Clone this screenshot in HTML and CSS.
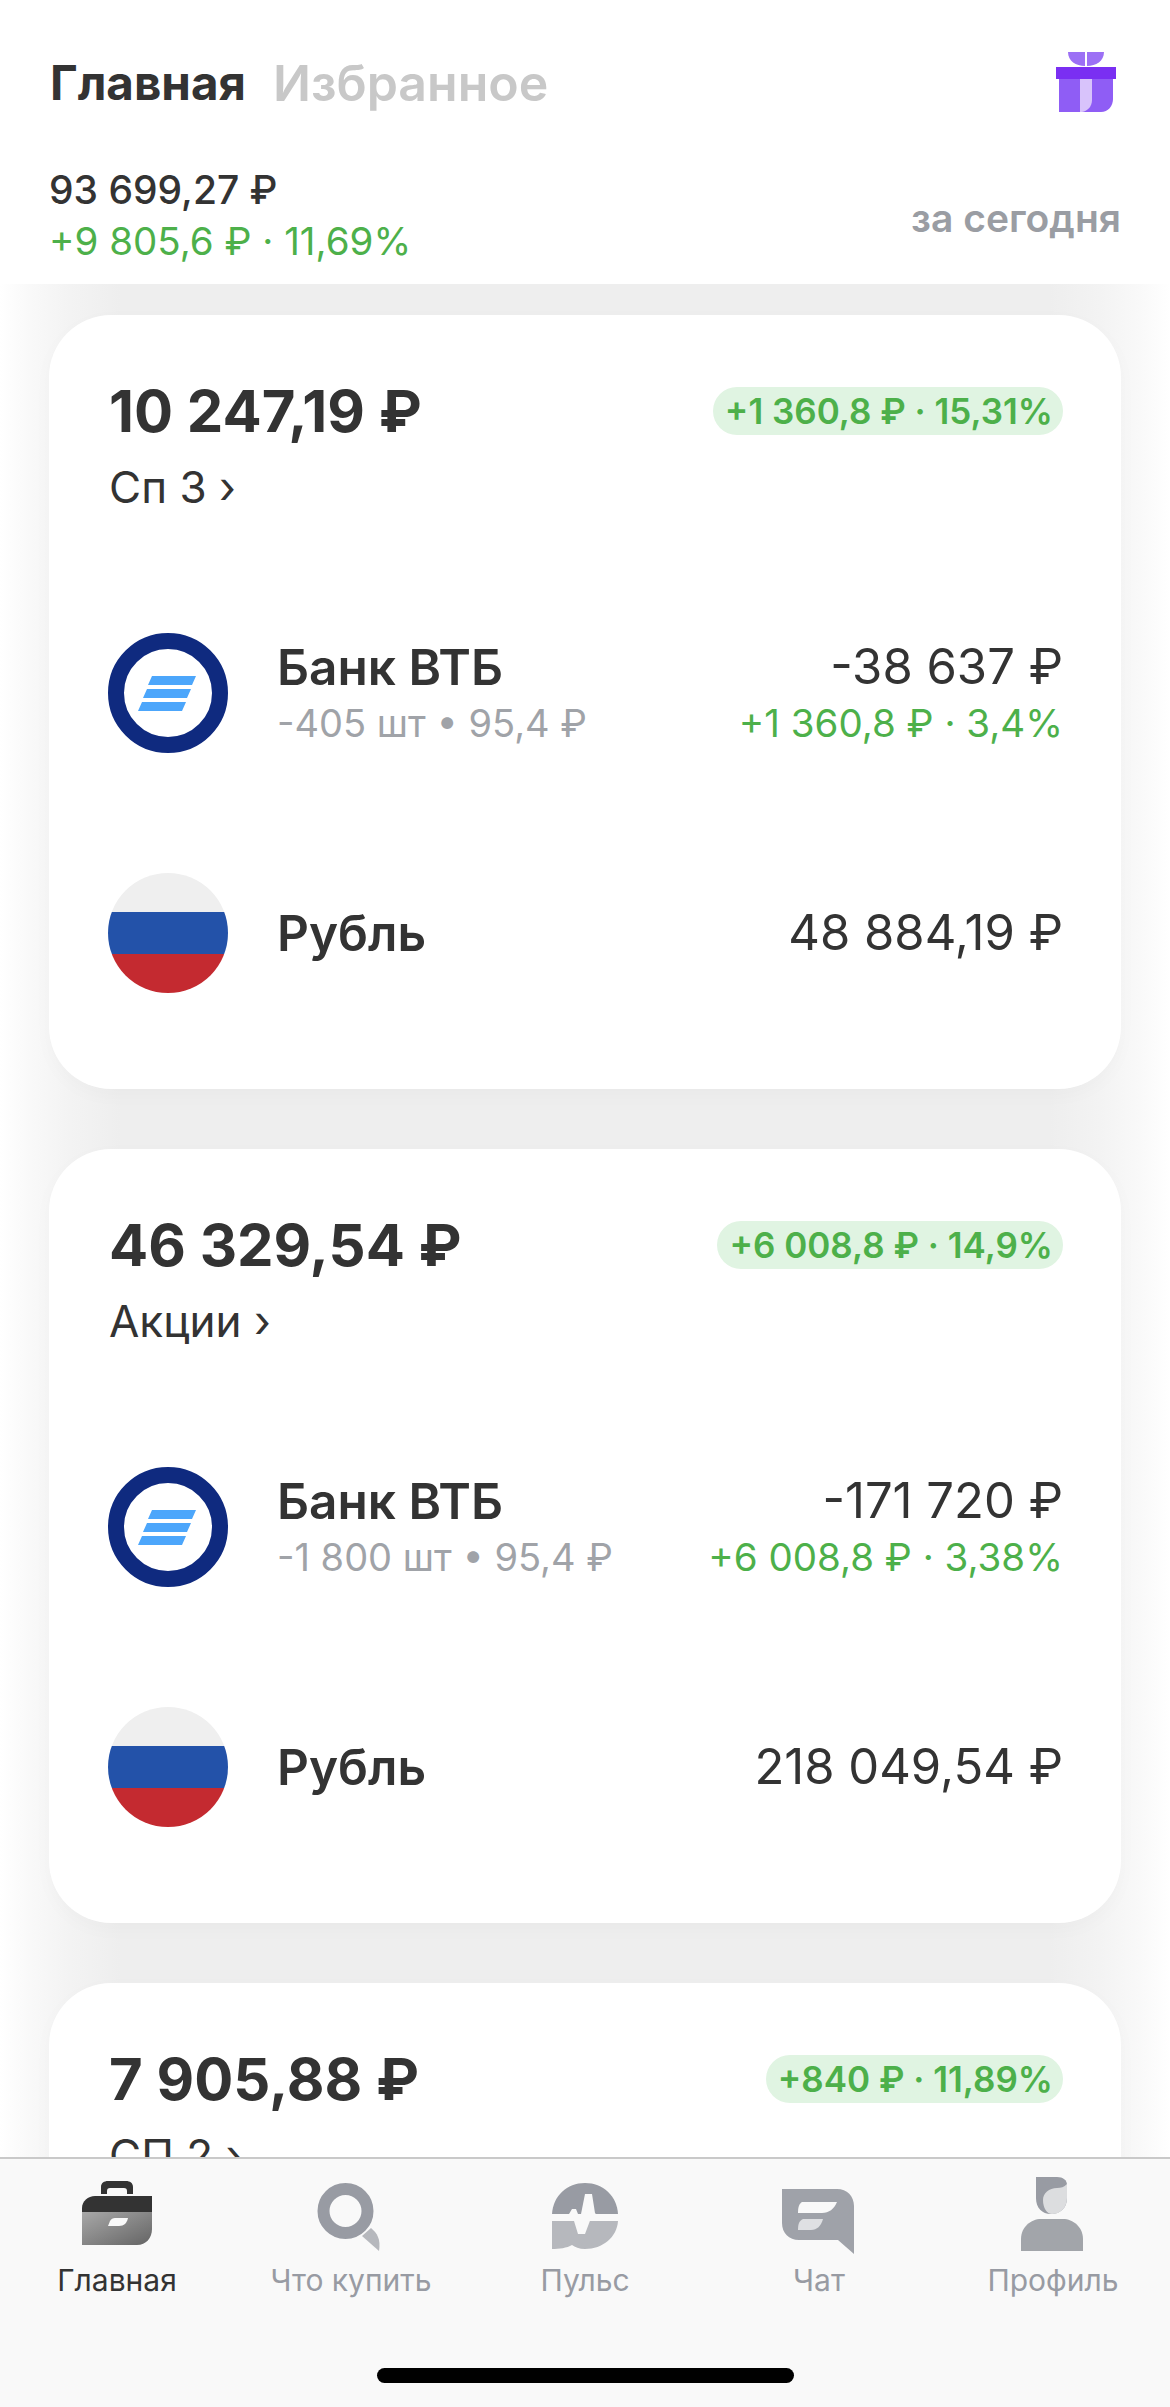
FILE: index.html
```html
<!DOCTYPE html>
<html lang="ru">
<head>
<meta charset="utf-8">
<title>Главная</title>
<link rel="stylesheet" href="styles.css">
</head>
<body>
<svg class="defs" width="0" height="0" aria-hidden="true">
  <defs>
    <symbol id="vtb" viewBox="0 0 120 120">
      <circle cx="60" cy="60" r="52" fill="#fff" stroke="#0f2a7f" stroke-width="16"/>
      <path d="M44 43H88L84 52H40ZM39 56H83L79 65H35ZM34 69H78L74 78H30Z" fill="#4ca6fb"/>
    </symbol>
    <symbol id="rub" viewBox="0 0 120 120">
      <clipPath id="rub-clip"><circle cx="60" cy="60" r="60"/></clipPath>
      <g clip-path="url(#rub-clip)">
        <rect width="120" height="40" fill="#efefef"/>
        <rect y="39" width="120" height="42" fill="#2352a9"/>
        <rect y="81" width="120" height="39" fill="#c42a30"/>
      </g>
    </symbol>
  </defs>
</svg>
<div class="screen">
  <header class="top">
    <div class="tabs-row">
      <div class="titles">
        <span class="title">Главная</span>
        <span class="title title-off">Избранное</span>
      </div>
      <svg class="gift" viewBox="0 0 60 60" width="60" height="60">
        <path d="M12 0H29V14C20 14 12 9 12 0ZM48 0H31V14C40 14 48 9 48 0Z" fill="#9c70f5"/>
        <path d="M3 27H57V47C57 54 52 60 45 60H3Z" fill="#8f5df5"/>
        <path d="M24 27H36V48C36 54 32 59 26 60H24Z" fill="#d8c3fb"/>
        <rect y="15" width="60" height="12" fill="#7a2ff2"/>
      </svg>
    </div>
    <div class="total-row">
      <div class="total">
        <div class="total-sum">93 699,27 ₽</div>
        <div class="total-gain">+9 805,6 ₽ · 11,69%</div>
      </div>
      <div class="period">за сегодня</div>
    </div>
  </header>

  <main class="feed">
    <section class="card">
      <div class="card-head">
        <div class="card-sum">10 247,19 ₽</div>
        <div class="pill">+1 360,8 ₽ · 15,31%</div>
      </div>
      <div class="card-name">Сп 3 ›</div>
      <div class="row row-first">
        <svg class="logo"><use href="#vtb"/></svg>
        <div class="row-main">
          <div class="row-name">Банк ВТБ</div>
          <div class="row-sub">-405 шт • 95,4 ₽</div>
        </div>
        <div class="row-side">
          <div class="row-val">-38 637 ₽</div>
          <div class="row-gain">+1 360,8 ₽ · 3,4%</div>
        </div>
      </div>
      <div class="row">
        <svg class="logo"><use href="#rub"/></svg>
        <div class="row-main"><div class="row-name">Рубль</div></div>
        <div class="row-side"><div class="row-val">48 884,19 ₽</div></div>
      </div>
    </section>

    <section class="card">
      <div class="card-head">
        <div class="card-sum">46 329,54 ₽</div>
        <div class="pill">+6 008,8 ₽ · 14,9%</div>
      </div>
      <div class="card-name">Акции ›</div>
      <div class="row row-first">
        <svg class="logo"><use href="#vtb"/></svg>
        <div class="row-main">
          <div class="row-name">Банк ВТБ</div>
          <div class="row-sub">-1 800 шт • 95,4 ₽</div>
        </div>
        <div class="row-side">
          <div class="row-val">-171 720 ₽</div>
          <div class="row-gain">+6 008,8 ₽ · 3,38%</div>
        </div>
      </div>
      <div class="row">
        <svg class="logo"><use href="#rub"/></svg>
        <div class="row-main"><div class="row-name">Рубль</div></div>
        <div class="row-side"><div class="row-val">218 049,54 ₽</div></div>
      </div>
    </section>

    <section class="card">
      <div class="card-head">
        <div class="card-sum">7 905,88 ₽</div>
        <div class="pill">+840 ₽ · 11,89%</div>
      </div>
      <div class="card-name">СП 2 ›</div>
    </section>
  </main>

  <nav class="tabbar">
    <div class="tab tab-on">
      <svg class="tab-icon" viewBox="0 0 80 80">
        <defs>
          <linearGradient id="case" x1="0" y1="0" x2="1" y2="1">
            <stop offset="0" stop-color="#a8a8a8"/>
            <stop offset="1" stop-color="#646464"/>
          </linearGradient>
        </defs>
        <path d="M24 17V10C24 6 27 4 31 4H49C53 4 56 6 56 10V17H50V14C50 12 49 11 47 11H33C31 11 30 12 30 14V17Z" fill="#333"/>
        <path d="M5 35V31C5 24 11 19 18 19H75V35Z" fill="#333"/>
        <path d="M5 35H75V52C75 61 69 68 60 68H5Z" fill="url(#case)"/>
        <path d="M33 44C34 42 36 41 38 41H51C50 46 47 49 42 49H31Z" fill="#f9f9f9"/>
      </svg>
      <span class="tab-label">Главная</span>
    </div>
    <div class="tab">
      <svg class="tab-icon" viewBox="0 0 80 80">
        <path d="M51 59L60 51C66 56 70 62 68 74Z" fill="#b6b8bd"/>
        <circle cx="34.500" cy="34" r="22" fill="none" stroke="#989ba3" stroke-width="12"/>
      </svg>
      <span class="tab-label">Что купить</span>
    </div>
    <div class="tab">
      <svg class="tab-icon" viewBox="0 0 80 80">
        <path d="M7 37C8 19 22 6 40 6C58 6 72 19 73 37Z" fill="#989ba3"/>
        <path d="M7 44H73C72 60 58 72 40 72C34 72 30 70 27 68C22 71 14 72 7 72Z" fill="#b6b8bd"/>
        <path d="M5 37H24L27 32H31L33 37H36L40 17H47L50 36C51 38 53 37 55 37H75V44H52C49 44 47 43 46 41L40 57H33L29 44H5Z" fill="#f9f9f9"/>
      </svg>
      <span class="tab-label">Пульс</span>
    </div>
    <div class="tab">
      <svg class="tab-icon" viewBox="0 0 80 80">
        <path d="M3 12H58C68 12 75 19 75 29V77L59 63H20C10 63 3 56 3 46Z" fill="#9fa2a9"/>
        <path d="M23 25H58C55 32 50 36 43 36H19C19 30 20 27 23 25Z" fill="#f9f9f9"/>
        <path d="M24 42H44C42 49 38 53 32 53H19C19 47 20 44 24 42Z" fill="#dfe0e3"/>
      </svg>
      <span class="tab-label">Чат</span>
    </div>
    <div class="tab">
      <svg class="tab-icon" viewBox="0 0 80 80">
        <path d="M23 0H44C50 0 54 3 54 8V21C54 31 47 37 38 37C29 37 23 31 23 21Z" fill="#989ba3"/>
        <path d="M30 23C30 16 36 11 44 11C48 11 51 10 54 7V21C54 31 47 37 39 37C34 37 30 31 30 23Z" fill="#dcdddf"/>
        <path d="M8 74V62C8 50 18 42 28 42H50C60 42 70 50 70 62V74Z" fill="#a2a5aa"/>
      </svg>
      <span class="tab-label">Профиль</span>
    </div>
    <div class="home-bar"></div>
  </nav>
</div>
</body>
</html>
```
FILE: styles.css
```css
* { box-sizing: border-box; }
html, body { margin: 0; padding: 0; }
body { font-family: Inter, "Noto Sans", sans-serif; color: #333; background: #fff; }
.defs { position: absolute; }
.screen { width: 1170px; height: 2407px; display: flex; flex-direction: column; overflow: hidden; background: #fff; }

.top { height: 284px; padding: 50px 49px 0 49px; background: #fff; position: relative; z-index: 2; flex: none; }
.tabs-row { display: flex; justify-content: space-between; align-items: flex-start; height: 112px; padding-right: 5px; }
.titles { display: flex; gap: 27px; padding-top: 5px; padding-left: 1px; }
.title { font-size: 47.500px; line-height: 56px; font-weight: 700; color: #333; }
.title-off { font-size: 50px; font-weight: 600; color: #c8c8c8; }
.gift { margin-top: 2px; }
.total-row { display: flex; justify-content: space-between; align-items: center; padding-top: 5px; }
.total-sum { font-size: 39px; line-height: 46px; font-weight: 500; }
.total-gain { font-size: 38.500px; line-height: 56px; color: #4db04a; }
.period { font-size: 39px; font-weight: 600; color: #9a9da3; margin-bottom: 2px; }

.feed { flex: 1; min-height: 0; overflow: hidden; padding: 31px 49px 0; display: flex; flex-direction: column; gap: 60px; background: linear-gradient(90deg, #fff 0, #f9f9f9 30px, #f3f3f3 70px, #eee 120px, #eee 1050px, #f3f3f3 1100px, #f9f9f9 1140px, #fff 100%); }
.card { flex: none; height: 774px; padding: 69px 58px 0 60px; background: #fff; border-radius: 62px; box-shadow: 0 6px 20px rgba(0, 0, 0, .025); }
.card-head { display: flex; justify-content: space-between; align-items: center; height: 54px; }
.card-sum { font-size: 58px; line-height: 54px; font-weight: 700; }
.pill { height: 48px; line-height: 48px; padding: 0 10px 0 12px; border-radius: 24px; background: #e0f4e2; color: #4db04a; font-size: 35px; font-weight: 600; }
.card-name { font-size: 44px; line-height: 50px; margin-top: 24px; }

.row { display: flex; align-items: center; height: 120px; margin-top: 120px; }
.row-first { margin-top: 121px; }
.logo { width: 120px; height: 120px; flex: none; margin-left: -1px; }
.row-main { flex: 1; padding-left: 49px; }
.row-name { font-size: 49.500px; line-height: 60px; font-weight: 600; }
.row-sub { font-size: 38px; line-height: 52px; color: #a0a3a8; }
.row-side { text-align: right; }
.row-val { font-size: 49px; line-height: 60px; }
.row-gain { font-size: 38.500px; line-height: 52px; color: #4db04a; }

.tabbar { flex: none; height: 250px; position: relative; z-index: 2; display: grid; grid-template-columns: repeat(5, 1fr); align-items: start; padding-top: 18px; background: #f9f9f9; border-top: 2px solid #c9c9c9; }
.tab { display: flex; flex-direction: column; align-items: center; }
.tab-icon { width: 80px; height: 80px; }
.tab-label { font-size: 30px; line-height: 36px; margin-top: 5px; color: #989ba3; }
.tab-on .tab-label { color: #333; }
.home-bar { position: absolute; left: 377px; top: 209px; width: 417px; height: 15px; border-radius: 8px; background: #000; }
```
